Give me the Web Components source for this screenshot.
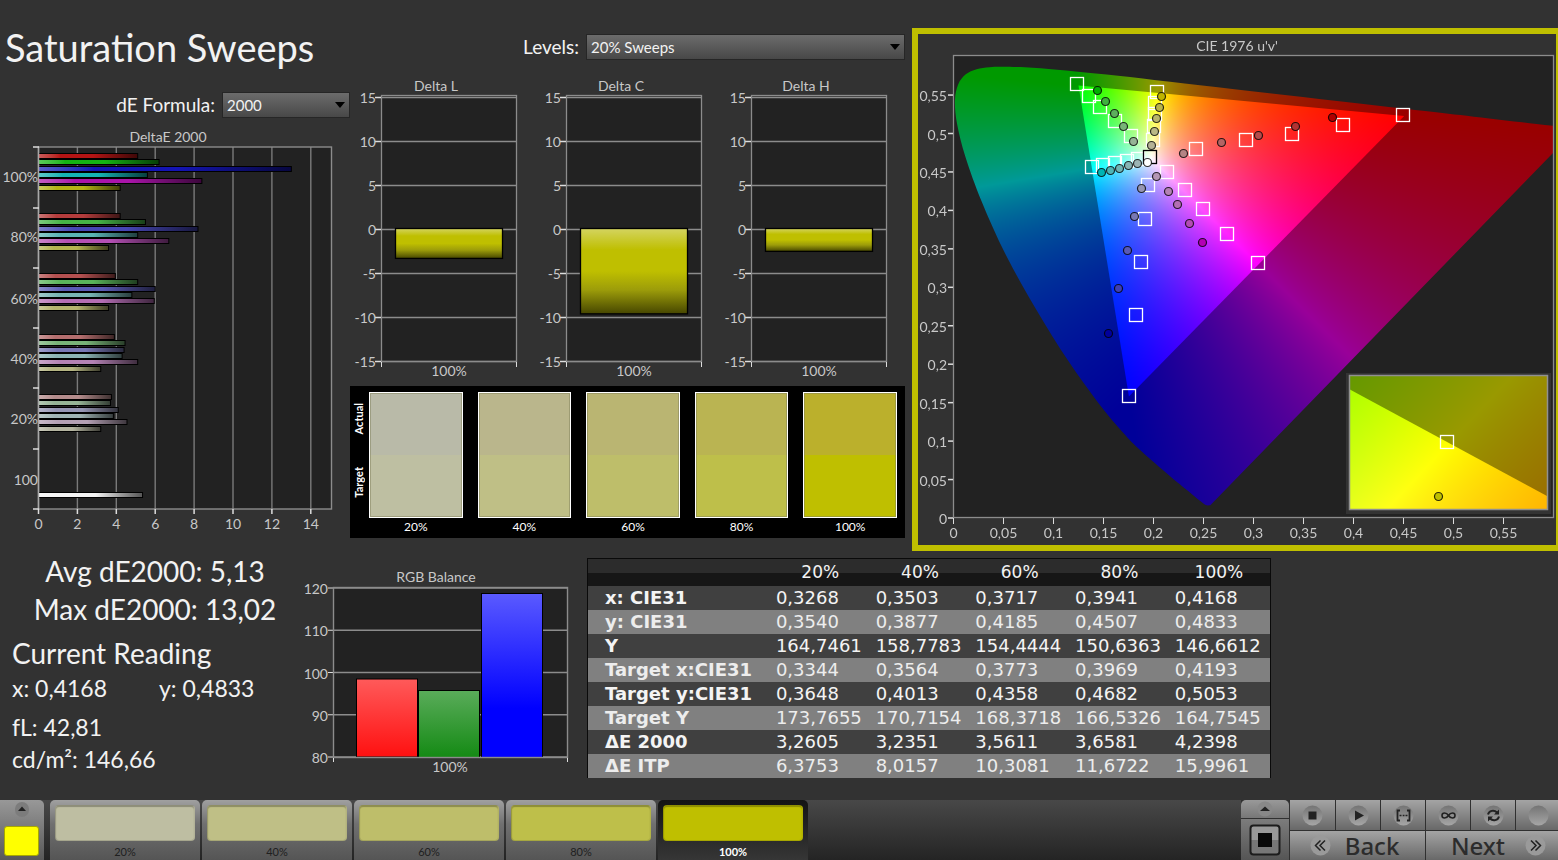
<!DOCTYPE html>
<html lang="en">
<head>
<meta charset="utf-8">
<title>Saturation Sweeps</title>
<style>
  html, body { margin: 0; }
  body {
    background: #323232;
    color: #f2f2f2;
    font-family: Lato, "Open Sans", sans-serif;
  }
</style>
</head>
<body>
<sweep-app></sweep-app>

<script>
const LINE = '#8c8c8c', PLOT = '#222222';
const line = (x1, y1, x2, y2, c = LINE, w = 1) =>
  `<line x1="${x1}" y1="${y1}" x2="${x2}" y2="${y2}" stroke="${c}" stroke-width="${w}"/>`;
const label = (x, y, t, a = 'middle') =>
  `<text x="${x}" y="${y + 5}" text-anchor="${a}">${t}</text>`;

function define(name, html, setup) {
  const tpl = document.createElement('template');
  tpl.innerHTML = html;
  customElements.define(name, class extends HTMLElement {
    connectedCallback() {
      if (this.shadowRoot) return;
      this.attachShadow({ mode: 'open' }).append(tpl.content.cloneNode(true));
      if (setup) setup(this.shadowRoot, this);
    }
  });
}

const CHART_CSS = `<style>
  :host { display: block; }
  svg { display: block; width: 100%; height: auto; }
  text { font: 14px Lato, "Open Sans", sans-serif; fill: #c8c8c8; }
</style>`;

/* ---- label + drop-down ---- */
define('option-field', `<style>
  :host { display: flex; justify-content: flex-end; align-items: center; gap: 7px; }
  label { font-size: 19px; line-height: 24px; }
  .box { position: relative; width: var(--field-width); }
  select {
    appearance: none; display: block; box-sizing: border-box; width: 100%; height: 26px; margin: 0;
    padding: 0 20px 0 4px; border: 1px solid #262626; border-radius: 0;
    background: linear-gradient(#6c6c6c, #484848); color: #f2f2f2;
    font: 15px Lato, "Open Sans", sans-serif;
  }
  svg { position: absolute; right: 5px; top: 10px; pointer-events: none; }
</style>
<label for="s"><slot></slot></label>
<div class="box"><select id="s"></select>
<svg width="10" height="6" viewBox="0 0 10 6"><path d="M0 0h10L5 6z" fill="#000"/></svg></div>`,
(root, el) => { root.querySelector('select').innerHTML = `<option>${el.getAttribute('value')}</option>`; });

/* ---- horizontal DeltaE bars ---- */
define('delta-e-chart', CHART_CSS + '<svg viewBox="0 0 350 412" role="img" aria-label="DeltaE 2000"></svg>', root => {
  const groups = [
    [28, ['#b41414','#14b414','#1414b4','#14b4b4','#aa14aa','#b4b414'], [5.1,6.2,13,5.6,8.4,4.2]],
    [88, ['#b43c3c','#46b446','#4646b4','#5ab4b4','#b450b4','#b4b450'], [4.2,5.5,8.2,5.1,6.7,3.6]],
    [148,['#b45050','#5ab45a','#5a5ab4','#78b4b4','#b46eb4','#b4b46e'], [3.95,5.1,6,4.8,5.95,3.6]],
    [209,['#b46e6e','#78b478','#7878b4','#8cb4b4','#b482b4','#b4b482'], [3.9,4.45,4.4,4.3,5.1,3.2]],
    [269,['#b48c8c','#96b496','#9696b4','#a0b4b4','#b4a0b4','#b4b4a0'], [3.75,3.7,4.1,3.85,4.55,3.2]],
    [367,['#f4f4f4'], [5.35]]
  ];
  const x0 = 38.5, k = 19.45;
  let defs = '', s = `<rect x="39" y="19" width="292" height="362" fill="${PLOT}"/>`;
  for (let v = 2; v <= 14; v += 2) s += line(x0 + v * k, 19, x0 + v * k, 381, '#7a7a7a', 1.4);
  s += `<rect x="38.5" y="19" width="293" height="362" fill="none" stroke="${LINE}" stroke-width="1.4"/>`;
  groups.forEach(([y, cols, vals], g) => cols.forEach((c, i) => {
    const id = `g${g}${i}`, w = vals[i] * k;
    const light = `color-mix(in srgb, ${c} 70%, white)`, dark = `color-mix(in srgb, ${c} 35%, black)`;
    defs += `<linearGradient id="${id}"><stop offset="0" style="stop-color:${light}"/><stop offset=".22" style="stop-color:${c}"/><stop offset=".55" style="stop-color:${c}"/><stop offset="1" style="stop-color:${dark}"/></linearGradient>`;
    s += `<rect x="38.5" y="${y - 3 + Math.round(i * 6.3) + .5}" width="${w}" height="5" fill="url(#${id})" stroke="#000"/>`;
  }));
  s += line(38.5, 19, 38.5, 381, '#a8a8a8', 1.5);
  [19, 80, 140, 200, 260, 321, 381].forEach(y => s += line(33, y, 39, y, '#ddd', 1.5));
  [[49,'100%'],[109,'80%'],[171,'60%'],[231,'40%'],[291,'20%'],[352,'100']].forEach(([y, t]) => s += label(38, y, t, 'end'));
  for (let v = 0; v <= 14; v += 2) s += line(x0 + v * k, 381, x0 + v * k, 386, '#ddd', 1.5) + label(x0 + v * k, 396, v);
  root.querySelector('svg').innerHTML = `<defs>${defs}</defs>${s}` + label(168, 9, 'DeltaE 2000');
});

/* ---- single Delta column chart ---- */
define('delta-chart', CHART_CSS + '<svg viewBox="0 0 185 304" role="img"></svg>', (root, el) => {
  const depth = +el.getAttribute('value'), top = 19, step = 44;
  let s = `<defs><linearGradient id="b" x2="0" y2="1"><stop offset="0" stop-color="#d4d460"/><stop offset=".25" stop-color="#bfbf00"/><stop offset=".5" stop-color="#bfbf00"/><stop offset=".72" stop-color="#9c9c0a"/><stop offset="1" stop-color="#464600"/></linearGradient></defs>`;
  s += `<rect x="31.5" y="17.5" width="135" height="266" fill="${PLOT}" stroke="${LINE}" stroke-width="1.3"/>`;
  for (let i = 0; i < 7; i++) {
    const y = top + i * step + .5;
    s += line(31, y, 167, y, LINE, 1.3) + line(25, y, 31, y, '#ddd', 1.5) + label(26, y, 15 - 5 * i, 'end');
  }
  s += `<rect x="45.5" y="150.5" width="107" height="${depth * 8.8}" fill="url(#b)" stroke="#000" stroke-width="1.3"/>`;
  s += line(31.5, 284, 31.5, 289, '#ddd') + line(166.5, 284, 166.5, 289, '#ddd');
  root.querySelector('svg').innerHTML = s + label(86, 8, el.getAttribute('name')) + label(99, 293, '100%');
});

/* ---- actual / target patches ---- */
define('patch-panel', `<style>
  :host { display: grid; grid-template-columns: 19px 1fr; box-sizing: border-box; height: 152px;
    padding: 6px 8px 0 0; background: #000; color: #fff; font-size: 12px; }
  .side { display: grid; grid-template-rows: 54px 72px; justify-items: center; align-items: center; width: 17px; height: 126px; }
  .side span { writing-mode: vertical-rl; transform: rotate(180deg); font-weight: 700; font-size: 11px; line-height: 14px; }
  .cells { display: grid; grid-template-columns: repeat(5, 1fr); column-gap: 15px; }
  .cell { text-align: center; line-height: 18px; }
  .patch { box-sizing: border-box; height: 126px; border: 1px solid #fff; box-shadow: inset 0 0 0 1px #80805a80; }
</style>
<div class="side"><span>Actual</span><span>Target</span></div>
<div class="cells"></div>`, root => {
  root.querySelector('.cells').innerHTML = [['20%','#b9baa8','#bebfa2'],['40%','#bab68c','#bfbf86'],['60%','#bab572','#bebe6a'],['80%','#bab452','#bebf4a'],['100%','#bbb02c','#bfbf00']]
    .map(([t, a, b]) => `<div class="cell"><div class="patch" style="background:linear-gradient(${a} 50%, ${b} 50%)"></div>${t}</div>`).join('');
});

/* ---- CIE 1976 chart ---- */
define('cie-chart', `<style>
  :host { display: block; box-sizing: border-box; border: solid #bfbf00; border-width: 6px 2px 6px 6px; }
  .stack { display: grid; }
  canvas, svg { grid-area: 1 / 1; display: block; width: 100%; height: auto; }
  text { font: 14px Lato, "Open Sans", sans-serif; fill: #c8c8c8; }
</style>
<div class="stack"><canvas width="638" height="511"></canvas>
<svg viewBox="0 0 638 511" role="img" aria-label="CIE 1976 u'v'"></svg></div>`, root => {
  const X = u => 35.5 + u * 1000, Y = v => 484 - v * 769;
  const ctx = root.querySelector('canvas').getContext('2d');
  /* chromaticity to RGB, scaled so that the strongest channel is full */
  const colour = (u, v) => {
    const d = 6 * u - 16 * v + 12, x = 9 * u / d, y = 4 * v / d, z = 1 - x - y;
    const rgb = [3.2406 * x - 1.5372 * y - .4986 * z, -.9689 * x + 1.8758 * y + .0415 * z, .0557 * x - .204 * y + 1.057 * z].map(c => Math.max(0, c));
    const m = Math.max(...rgb) || 1;
    return rgb.map(c => 255 * c / m);
  };
  const field = (w, h, toUV, dim) => {
    const c = document.createElement('canvas'); c.width = w; c.height = h;
    const g = c.getContext('2d'), im = g.createImageData(w, h);
    for (let j = 0, p = 0; j < h; j++) for (let i = 0; i < w; i++) {
      const [r, gr, b] = colour(...toUV(i, j));
      im.data[p++] = r * dim; im.data[p++] = gr * dim; im.data[p++] = b * dim; im.data[p++] = 255;
    }
    g.putImageData(im, 0, 0);
    return c;
  };
  ctx.fillStyle = PLOT; ctx.fillRect(35, 22, 601, 462);
  const xy = [.1741,.005,.1714,.0051,.1689,.0069,.1644,.0109,.1566,.0177,.144,.0297,.1355,.0399,.1241,.0578,.1096,.0868,.0913,.1327,.0687,.2007,.0454,.295,.0235,.4127,.0082,.5384,.0039,.6548,.0139,.7502,.0389,.812,.0743,.8338,.1142,.8262,.1547,.8059,.2296,.7543,.3016,.6923,.3731,.6245,.4441,.5547,.5125,.4866,.5752,.4242,.627,.3725,.6658,.334,.6915,.3083,.719,.2809,.7347,.2653];
  const pts = [];
  for (let i = 0; i < xy.length; i += 2) {
    const d = -2 * xy[i] + 12 * xy[i + 1] + 3;
    pts.push([X(4 * xy[i] / d), Y(9 * xy[i + 1] / d)]);
  }
  const uv = (i, j) => [(i - 35) / 1000, (484 - j) / 769];
  ctx.save();
  ctx.beginPath(); ctx.rect(36, 22, 599, 462); ctx.clip();
  ctx.beginPath(); ctx.moveTo(...pts[0]);
  for (let i = 0; i < pts.length - 1; i++) {
    const a = pts[Math.max(0, i - 1)], b = pts[i], c = pts[i + 1], d = pts[Math.min(pts.length - 1, i + 2)];
    ctx.bezierCurveTo(b[0] + (c[0] - a[0]) / 6, b[1] + (c[1] - a[1]) / 6, c[0] - (d[0] - b[0]) / 6, c[1] - (d[1] - b[1]) / 6, c[0], c[1]);
  }
  ctx.closePath(); ctx.clip();
  ctx.drawImage(field(638, 511, uv, .6), 0, 0);
  ctx.beginPath(); ctx.moveTo(X(.4507), Y(.5229)); ctx.lineTo(X(.125), Y(.5625)); ctx.lineTo(X(.1754), Y(.1579)); ctx.closePath(); ctx.clip();
  ctx.drawImage(field(638, 511, uv, 1), 0, 0);
  ctx.restore();

  /* magnified neighbourhood of the selected target */
  ctx.fillStyle = '#333'; ctx.fillRect(428, 339, 205, 141);
  const det = 5546 * 6560 + 5644 * 1801;
  const zoomUV = (i, j) => {
    const a = i - 99, b = j - 67;
    return [.2039 + (6560 * a + 5644 * b) / det, .5529 - (-1801 * a + 5546 * b) / det];
  };
  ctx.drawImage(field(198, 134, zoomUV, .6), 431, 342);
  ctx.save();
  ctx.beginPath(); ctx.moveTo(431, 355); ctx.lineTo(629, 462); ctx.lineTo(629, 476); ctx.lineTo(431, 476); ctx.clip();
  ctx.drawImage(field(198, 134, zoomUV, 1), 431, 342);
  ctx.restore();

  let s = `<rect x="35.5" y="21.5" width="600" height="462" fill="none" stroke="${LINE}" stroke-width="1.3"/><rect x="431.5" y="341.5" width="198" height="134" fill="none" stroke="#909090" stroke-width="1.5"/>`;
  for (let i = 0; i < 12; i++) {
    const t = String(i * 5 / 100).replace('.', ','), x = X(i * .05), y = Y(i * .05);
    s += line(x, 484, x, 490, '#ddd') + label(x, 499, t);
    s += line(30, y, 35, y, '#ddd', 1.5) + label(29, y + 1, t, 'end');
  }
  const sq = (x, y, c = '#fff') => `<rect x="${x - 6.5}" y="${y - 6.5}" width="13" height="13" fill="none" stroke="${c}" stroke-width="1.3"/>`;
  const dot = (x, y, c) => `<circle cx="${x + .5}" cy="${y + .5}" r="4" fill="${c}" stroke="#000" stroke-opacity=".8" stroke-width="1.2"/>`;
  const targets = [[159,50],[171,62],[182,73],[197,87],[213,102],[239,58],[237,69],[237,80],[236,92],[235,106],[174,133],[185,131],[197,129],[209,127],[220,125],[249,138],[267,156],[285,175],[309,200],[340,229],[230,151],[227,185],[223,228],[218,281],[211,362],[278,115],[328,106],[374,100],[425,91],[485,81],[529,408]];
  const readings = [
    [['#00b000',179,56],['#3eb03e',187,67],['#5cb05c',196,79],['#78b478',205,92],['#96b496',215,107]],
    [['#bfb400',243,62],['#bab44a',241,73],['#b8b46a',238,84],['#bab886',236,97],['#b4b296',233,111]],
    [['#00b4b4',183,138],['#50b4b4',192,136],['#70b4b4',201,134],['#88b4b4',210,131],['#9cb4b4',219,129]],
    [['#9696b4',223,154],['#7878b4',216,182],['#5a5ab4',209,216],['#4040b0',200,254],['#00009c',190,299]],
    [['#b496b4',238,142],['#b482b4',250,157],['#b46eb4',259,170],['#b44cb4',271,189],['#b400b4',284,208]],
    [['#b48484',265,119],['#b46464',303,108],['#b44c4c',340,101],['#b43232',377,92],['#b00000',414,83]],
    [['#ffffff',229,128],['#bfbf00',520,462]]
  ];
  s += targets.map(([x, y]) => sq(x, y)).join('') + sq(232, 123, '#000');
  s += readings.flat().map(([c, x, y]) => dot(x, y, c)).join('');
  root.querySelector('svg').innerHTML = s + label(319, 12, "CIE 1976 u'v'");
});

/* ---- RGB balance ---- */
define('rgb-chart', CHART_CSS + '<svg viewBox="0 0 287 215" role="img" aria-label="RGB Balance"></svg>', root => {
  const grad = (id, a, b, m) => `<linearGradient id="${id}" x2="0" y2="1"><stop offset="0" stop-color="${a}"/><stop offset="${m}" stop-color="${b}"/></linearGradient>`;
  let s = `<defs>${grad('r', '#ff5a5a', '#ff1010', 1)}${grad('g', '#5aac5a', '#148a14', 1)}${grad('b', '#5a5aff', '#0000ff', .7)}</defs>`;
  s += `<rect x="33.5" y="22.5" width="234" height="169" fill="${PLOT}"/>`;
  for (let i = 0; i < 5; i++) {
    const y = 23 + i * 42.25;
    s += line(33, y, 268, y, LINE, 1.3) + line(28, y, 33, y, '#ddd') + label(28, y + 1, 120 - 10 * i, 'end');
  }
  s += `<rect x="56.5" y="114" width="61" height="78" fill="url(#r)" stroke="#000"/><rect x="118.5" y="125.5" width="61" height="67" fill="url(#g)" stroke="#000"/><rect x="181.5" y="28.5" width="61" height="164" fill="url(#b)" stroke="#000"/>`;
  s += `<rect x="33.5" y="22.5" width="234" height="170" fill="none" stroke="${LINE}" stroke-width="1.4"/>` + line(33.5, 193, 33.5, 197, '#ddd') + line(267.5, 193, 267.5, 197, '#ddd');
  root.querySelector('svg').innerHTML = s + label(136, 12, 'RGB Balance') + label(150, 202, '100%');
});

/* ---- readings ---- */
define('reading-summary', `<style>
  :host { display: block; padding-top: 1px; }
  .stat { padding-left: 10px; text-align: center; font-size: 28px; line-height: 38px; white-space: nowrap; }
  h2 { margin: 8px 0 0 12px; font-size: 28px; font-weight: 400; line-height: 35px; }
  .row { display: grid; grid-template-columns: 147px 1fr; margin: 0 0 6px 12px; font-size: 23px; line-height: 34px; }
  .line { margin-left: 12px; font-size: 23px; line-height: 32px; }
</style>
<div class="stat">Avg dE2000: 5,13</div><div class="stat">Max dE2000: 13,02</div>
<h2>Current Reading</h2>
<div class="row"><span>x: 0,4168</span><span>y: 0,4833</span></div>
<div class="line">fL: 42,81</div><div class="line">cd/m²: 146,66</div>`);

/* ---- data table ---- */
define('data-table', `<style>
  :host { display: block; }
  table { width: 100%; table-layout: fixed; border-collapse: collapse; box-sizing: border-box;
    border: solid #0a0a0a; border-width: 1px 1px 0 1px; font-family: "DejaVu Sans", sans-serif; }
  col:first-child { width: 27%; }
  thead tr { height: 27px; background: linear-gradient(#2c2c2c 50%, #161616 50%); }
  thead th { padding: 0 3px 0 0; font-size: 17px; font-weight: 400; line-height: 26px; }
  tbody th, td { padding: 0; height: 24px; line-height: 24px; text-align: left; white-space: nowrap; font-size: 18px; }
  tbody th { padding-left: 17px; font-size: 18px; }
  td { padding-left: 4px; }
  tbody tr { background: #404040; color: #f4f4f4; }
  tbody tr:nth-child(even) { background: #808080; color: #ededed; }
</style><table><colgroup><col><col><col><col><col><col></colgroup><thead></thead><tbody></tbody></table>`, root => {
  root.querySelector('thead').innerHTML = '<tr><td></td>' + ['20%','40%','60%','80%','100%'].map(t => `<th scope="col">${t}</th>`).join('') + '</tr>';
  root.querySelector('tbody').innerHTML = [
    ['x: CIE31','0,3268','0,3503','0,3717','0,3941','0,4168'],
    ['y: CIE31','0,3540','0,3877','0,4185','0,4507','0,4833'],
    ['Y','164,7461','158,7783','154,4444','150,6363','146,6612'],
    ['Target x:CIE31','0,3344','0,3564','0,3773','0,3969','0,4193'],
    ['Target y:CIE31','0,3648','0,4013','0,4358','0,4682','0,5053'],
    ['Target Y','173,7655','170,7154','168,3718','166,5326','164,7545'],
    ['ΔE 2000','3,2605','3,2351','3,5611','3,6581','4,2398'],
    ['ΔE ITP','6,3753','8,0157','10,3081','11,6722','15,9961']
  ].map(([h, ...c]) => `<tr><th scope="row">${h}</th>${c.map(v => `<td>${v}</td>`).join('')}</tr>`).join('');
});

/* ---- level button in the bottom bar ---- */
define('level-tab', `<style>
  :host { display: block; width: 150px; }
  button { display: block; width: 100%; height: 60px; margin: 0; padding: 5px 5px 0; border: 0; border-radius: 5px 5px 0 0;
    background: linear-gradient(#a0a0a0, #707070 40%, #555); color: #202020; font: 11px/22px Lato, "Open Sans", sans-serif; }
  i { display: block; height: 36px; box-sizing: border-box; border-radius: 4px; background: var(--level);
    border: 1px solid; border-color: #00000040 #00000010 #00000020 #00000030; box-shadow: inset 0 1px 1px #0004; }
  :host([selected]) button { background: linear-gradient(#141414, #363636); color: #fff; font-weight: 700; }
</style><button type="button"><i></i><slot></slot></button>`);

/* ---- transport controls ---- */
define('transport-bar', `<style>
  :host { display: grid; grid-template-columns: 48px 45px repeat(5, 44px); grid-template-rows: 30px 29px; gap: 1px;
    width: 317px; height: 60px; background: #303030; overflow: hidden; }
  button { display: flex; align-items: center; justify-content: center; margin: 0; padding: 0; border: 0;
    background: linear-gradient(#a4a4a4, #686868); color: #2c2c2c; font: 500 24px/28px "Noto Sans", sans-serif; }
  .side { grid-row: 1 / 3; display: grid; grid-template-rows: 18px 41px; gap: 1px; }
  .side button:first-child { border-radius: 5px 5px 0 0; background: linear-gradient(#999, #777); }
  .side button + button { background: linear-gradient(#7c7c7c, #555); }
  .nav { grid-column: span 3; gap: 14px; padding-right: 6px; }
  .next { gap: 20px; padding: 0 0 0 11px; }
  svg { display: block; }
</style>
<div class="side"><button type="button" aria-label="Expand"><svg width="16" height="16"><circle cx="8" cy="8" r="7.5" fill="#888"/><path d="M3 10l5-4.5 5 4.5z" fill="#222"/></svg></button>
<button type="button" aria-label="Record"><svg width="32" height="32"><defs><linearGradient id="m" x2="0" y2="1"><stop offset=".5" stop-color="#999"/><stop offset=".5" stop-color="#777"/></linearGradient></defs><rect x="1.5" y="1.5" width="29" height="29" rx="3" fill="url(#m)" stroke="#1c1c1c" stroke-width="2"/><rect x="9" y="9" width="14" height="14" fill="#080808"/></svg></button></div>
<button type="button" aria-label="Stop" data-icon='<path d="M6.500 6.500h8v8h-8z" fill="#222"/>'></button>
<button type="button" aria-label="Play" data-icon='<path d="M7 5.500l9 5-9 5z" fill="#222"/>'></button>
<button type="button" aria-label="Range" data-icon='<path d="M7 5.500H4.500v10H7M14 5.500h2.500v10H14" stroke="#222" stroke-width="1.800" fill="none"/><path d="M6.500 10.500h2M9.700 10.500h1.800M12.500 10.500h2" stroke="#222" stroke-width="1.600"/>'></button>
<button type="button" aria-label="Continuous" data-icon='<path d="M10.500 10.500C8.500 7.200 4 7.200 4 10.500s4.500 3.300 6.500 0 6.500-3.300 6.500 0-4.500 3.300-6.500 0z" stroke="#222" stroke-width="1.600" fill="none"/>'></button>
<button type="button" aria-label="Refresh" data-icon='<path d="M5 9.500c1-4 6-5 9-2M16 11.500c-1 4-6 5-9 2" stroke="#222" stroke-width="2" fill="none"/><path d="M16 4.500v5h-5zM5 16.500v-5h5z" fill="#222"/>'></button>
<button type="button" aria-label="More" data-icon=""></button>
<button type="button" class="nav"><svg width="21" height="21"><circle cx="10.5" cy="10.5" r="10" fill="#9a9a9a"/><path d="M10.5 5.500l-5 5 5 5M15 5.500l-5 5 5 5" stroke="#222" stroke-width="1.500" fill="none"/></svg>Back</button>
<button type="button" class="nav next">Next<svg width="21" height="21"><circle cx="10.5" cy="10.5" r="10" fill="#9a9a9a"/><path d="M6 5.500l5 5-5 5M10.500 5.500l5 5-5 5" stroke="#222" stroke-width="1.500" fill="none"/></svg></button>`, root => {
  const grad = n => `<defs><linearGradient id="k${n}" x2="0" y2="1"><stop offset="0" stop-color="#747474"/><stop offset="1" stop-color="#a6a6a6"/></linearGradient></defs>`;
  root.querySelectorAll('[data-icon]').forEach((b, n) => {
    b.innerHTML = `<svg width="21" height="21">${grad(n)}<circle cx="10.5" cy="10.5" r="10" fill="url(#k${n})"/>${b.dataset.icon}</svg>`;
    b.removeAttribute('data-icon');
  });
});

define('control-bar', `<style>
  :host { display: flex; height: 60px; background: linear-gradient(#484848, #242424); overflow: hidden; }
  .current { width: 44px; margin-right: 6px; border-radius: 0 5px 0 0; background: linear-gradient(#989898, #585858); }
  .current button { display: flex; justify-content: center; width: 100%; height: 26px; margin: 0; padding: 2px 0 0; border: 0; background: none; }
  .current div { width: 35px; height: 30px; box-sizing: border-box; margin: 0 0 0 4px; border-radius: 3px; background: #ff0; border: 1px solid #a8a800; }
  .tabs { display: flex; gap: 2px; flex: 1; }
</style>
<div class="current"><button type="button" aria-label="Expand"><svg width="14" height="16"><rect width="14" height="15" rx="7" fill="#7c7c7c"/><path d="M3 9l4-4.500L11 9z" fill="#222"/></svg></button><div></div></div>
<div class="tabs">
<level-tab style="--level:#bebea2">20%</level-tab><level-tab style="--level:#bfbf86">40%</level-tab><level-tab style="--level:#bebe6a">60%</level-tab><level-tab style="--level:#bebf4a">80%</level-tab><level-tab selected style="--level:#bfbf00">100%</level-tab>
</div><transport-bar></transport-bar>`);

define('sweep-app', `<style>
  :host { display: flex; flex-direction: column; min-height: 100vh; }
  main { flex: 1; }
  .top { display: grid; grid-template-columns: 350fr 562fr 646fr; }
  h1 { margin: 19px 0 17px 5px; font-size: 38px; font-weight: 400; line-height: 56px; white-space: nowrap; }
  .left option-field { --field-width: 128px; }
  .left delta-e-chart { margin-top: 10px; }
  .mid { padding: 34px 7px 0 0; }
  .mid option-field { --field-width: 319px; }
  .deltas { display: grid; grid-template-columns: repeat(3, 1fr); margin: 18px 0 4px; }
  .right { padding-top: 28px; }
  .bottom { display: grid; grid-template-columns: 300fr 287fr 684fr 287fr; align-items: start; }
  rgb-chart { margin-top: 14px; }
  data-table { margin-top: 7px; }
</style>
<main>
  <div class="top">
    <section class="left"><h1>Saturation Sweeps</h1><option-field value="2000">dE Formula:</option-field><delta-e-chart></delta-e-chart></section>
    <section class="mid"><option-field value="20% Sweeps">Levels:</option-field>
      <div class="deltas"><delta-chart name="Delta L" value="3.4"></delta-chart><delta-chart name="Delta C" value="9.7"></delta-chart><delta-chart name="Delta H" value="2.6"></delta-chart></div>
      <patch-panel></patch-panel></section>
    <section class="right"><cie-chart></cie-chart></section>
  </div>
  <div class="bottom"><reading-summary></reading-summary><rgb-chart></rgb-chart><data-table></data-table></div>
</main>
<control-bar></control-bar>`);
</script>
</body>
</html>
